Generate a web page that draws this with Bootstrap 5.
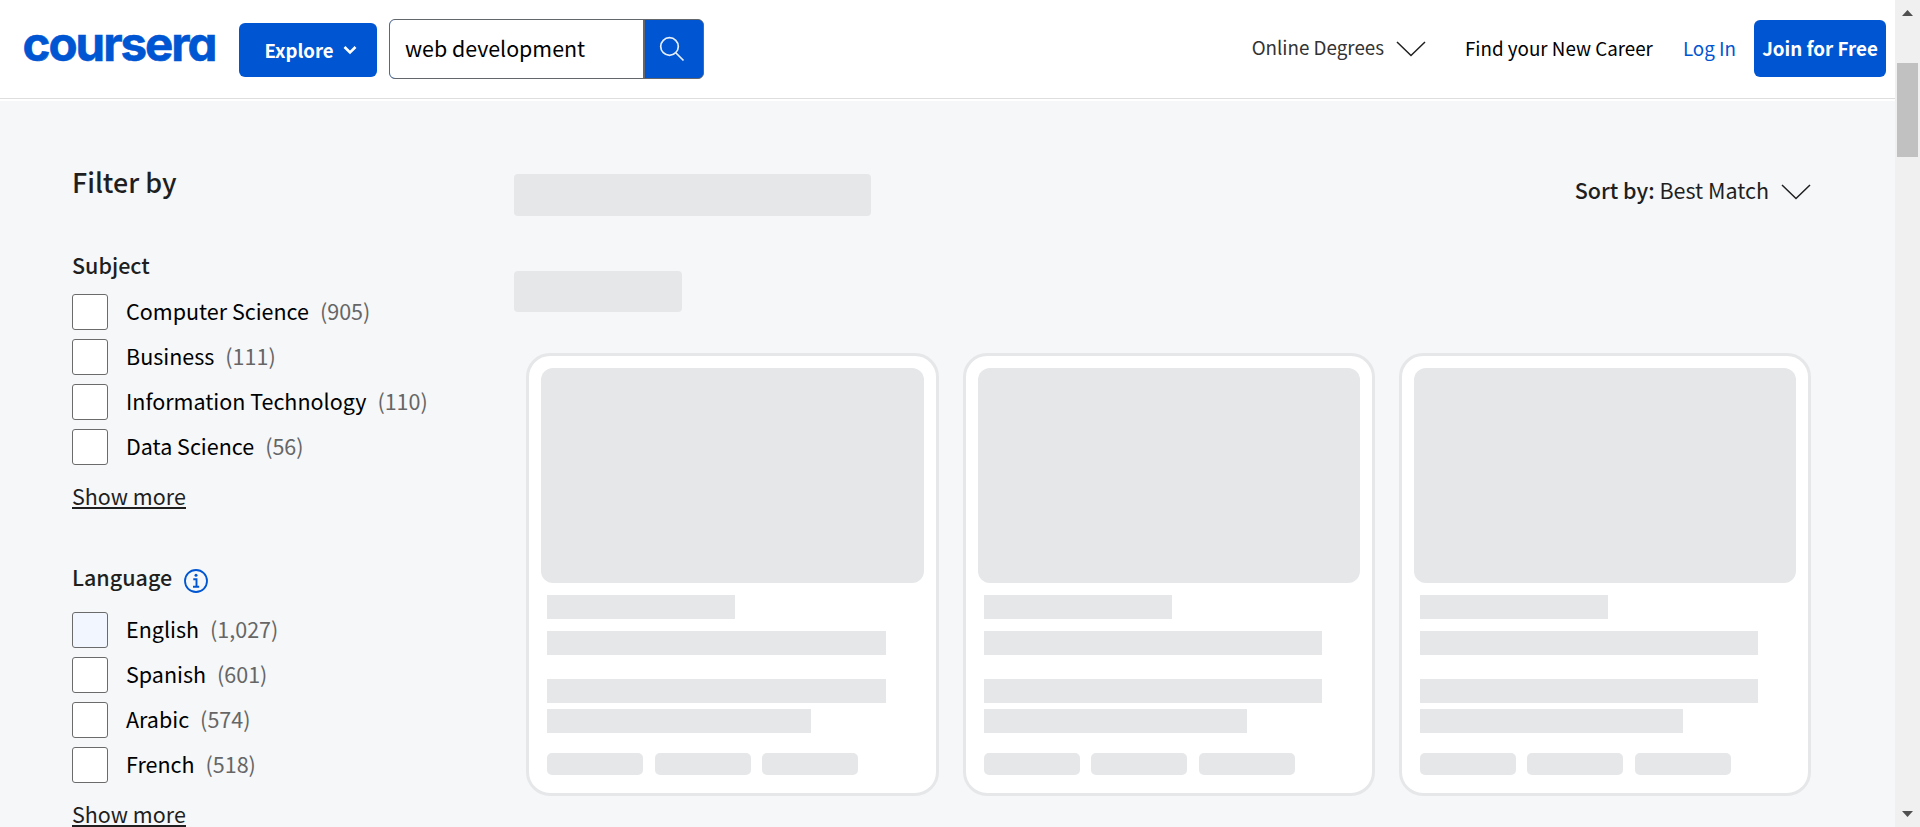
<!DOCTYPE html>
<html lang="en">
<head>
<meta charset="utf-8">
<meta name="viewport" content="width=device-width, initial-scale=1">
<title>web development | Coursera</title>
<link href="https://cdn.jsdelivr.net/npm/bootstrap@5.3.0/dist/css/bootstrap.min.css" rel="stylesheet">
<style>
:root{--blue:#0056d2;--bone:#e5e7e9;--ink:#1f1f1f}
body{font-family:"Noto Sans CJK SC",sans-serif;font-size:21.5px;line-height:30px;color:var(--ink);background:#f5f7f9}
h1,h2{font-weight:500;line-height:30px;margin:0}
h1{font-size:26.8px}
h2{font-size:21.5px}
.top-bar{height:101px;background:#fff;position:relative;padding:0 9px 0 20px}
.top-bar::after{content:"";position:absolute;left:0;right:0;bottom:2px;height:1px;background:#dedede}
.wordmark{margin-top:12px;font:700 47.5px Inter,sans-serif;font-feature-settings:"cv11"}
.btn-blue{background:var(--blue)!important;color:#fff!important;border:0;border-radius:6px;font-size:18.8px;font-weight:700;line-height:30px;padding:0;display:flex;align-items:center;justify-content:center}
.explore{width:138px;height:54px;margin:23px 0 0 19px;gap:9px;font-size:18.6px;padding:0 0 1px 5px}
.search-box{width:315px;height:60px;margin:19px 0 0 12px;border:1px solid #63666a;border-radius:6px;background:var(--blue);overflow:hidden}
.search-box .form-control{flex:0 0 253px;border:0;border-radius:0;padding:0 0 4px 15px;font-size:21.4px;line-height:30px;height:58px;color:#000;background:#fff;box-shadow:none}
.search-box button{border:0;border-left:2px solid #63666a;background:var(--blue);padding:0}
.nav-text{font-size:18.8px;line-height:30px;color:#000;text-decoration:none}
.join{width:132px;height:57px;margin:20px 0 0 18px;font-size:18.8px;padding-bottom:1px}
.layout{padding:65px 84px 0 72px}
.filters{width:442px;flex:none}
.option{height:36px;margin-bottom:9px;color:#000}
.option .form-check-input{width:36px;height:36px;margin:0 18px 0 0;float:none;border:1px solid #6b6b6b;border-radius:3px;background-color:#fff;flex:none}
.option .form-check-input.hovered{background-color:#f2f7ff}
.option label{padding-bottom:3px}
.option span{color:#666;margin-left:11px;padding-bottom:3px}
.more{display:inline-block;color:var(--ink);line-height:30px;height:28px;text-decoration:none;border-bottom:2px solid var(--ink);vertical-align:top}
.bone{background:var(--bone)}
.bone-title{height:41.4px;border-radius:4px}
.cards{padding-left:12.4px;display:grid;grid-template-columns:repeat(3,1fr);gap:24px}
.course{height:443px;border:3px solid var(--bone);border-radius:24px;background:#fff;padding:12px}
.thumb{height:215px;border-radius:12px}
.course-lines{padding:12px 0 0 6px}
.line{height:24px}
.chip{width:96px;height:21.5px;border-radius:5px}
.scroll-rail{width:25px;background:#f0f0f0;flex:none}
.thumb-bar{width:21px;height:94px;margin:47px 0 0 2px;background:#c1c1c1}
</style>
</head>
<body class="vh-100 overflow-hidden d-flex">
<div class="flex-grow-1 overflow-hidden">
  <header class="top-bar d-flex align-items-start">
    <svg class="wordmark" width="200" height="66" role="img" aria-label="coursera"><text x="2.5" y="49" textLength="195" lengthAdjust="spacing" fill="#0056d2" stroke="#0056d2" stroke-width=".6">coursera</text></svg>
    <button class="btn btn-blue explore">Explore
      <svg width="14" height="10" viewBox="0 0 14 10" fill="none" stroke="#fff" stroke-width="2.600"><path d="M1.500 2 7 7.500 12.500 2"/></svg>
    </button>
    <form class="search-box d-flex">
      <input class="form-control" value="web development" aria-label="Search">
      <button type="button" class="flex-grow-1 d-flex align-items-center justify-content-center" aria-label="Search">
        <svg width="26" height="26" viewBox="0 0 26 26" fill="none" stroke="#e6eefa" stroke-width="1.700" style="margin-right:4px"><circle cx="10.500" cy="10.500" r="8.800"/><path d="m17 17 7.500 7.500"/></svg>
      </button>
    </form>
    <nav class="ms-auto d-flex align-items-start">
      <a class="nav-text" style="margin-top:32px;color:#333" href="#">Online Degrees</a>
      <svg width="30" height="16" viewBox="0 0 30 16" fill="none" stroke="#1f1f1f" stroke-width="1.500" style="margin:41px 0 0 12px"><path d="M1 1 15 14.500 29 1"/></svg>
      <a class="nav-text" style="margin:33px 0 0 39px" href="#">Find your New Career</a>
      <a class="nav-text" style="margin:33px 0 0 30px;color:#0056d2" href="#">Log In</a>
      <button class="btn btn-blue join text-nowrap">Join for Free</button>
    </nav>
  </header>

  <main class="layout d-flex">
    <aside class="filters">
      <h1 style="height:31px;padding-top:1px">Filter by</h1>
      <h2 style="margin:53px 0 14px">Subject</h2>
      <div class="option d-flex align-items-center"><input id="s1" type="checkbox" class="form-check-input"><label for="s1">Computer Science</label><span>(905)</span></div>
      <div class="option d-flex align-items-center"><input id="s2" type="checkbox" class="form-check-input"><label for="s2">Business</label><span>(111)</span></div>
      <div class="option d-flex align-items-center"><input id="s3" type="checkbox" class="form-check-input"><label for="s3">Information Technology</label><span>(110)</span></div>
      <div class="option d-flex align-items-center"><input id="s4" type="checkbox" class="form-check-input"><label for="s4">Data Science</label><span>(56)</span></div>
      <div style="height:88px;padding-top:7px"><a class="more">Show more</a></div>
      <div class="d-flex" style="height:50px">
        <h2>Language</h2>
        <svg width="24" height="24" viewBox="0 0 24 24" fill="none" stroke="#0056d2" stroke-width="1.800" style="margin:7px 0 0 12px"><circle cx="12" cy="12" r="11"/><path d="M9.300 10.200H12.500V17.800M9 17.800H15.200" stroke-width="1.900"/><circle cx="12" cy="6.300" r="1.500" fill="#0056d2" stroke="none"/></svg>
      </div>
      <div class="option d-flex align-items-center"><input id="l1" type="checkbox" class="form-check-input hovered"><label for="l1">English</label><span>(1,027)</span></div>
      <div class="option d-flex align-items-center"><input id="l2" type="checkbox" class="form-check-input"><label for="l2">Spanish</label><span>(601)</span></div>
      <div class="option d-flex align-items-center"><input id="l3" type="checkbox" class="form-check-input"><label for="l3">Arabic</label><span>(574)</span></div>
      <div class="option d-flex align-items-center"><input id="l4" type="checkbox" class="form-check-input"><label for="l4">French</label><span>(518)</span></div>
      <div style="padding-top:7px"><a class="more">Show more</a></div>
    </aside>

    <section class="flex-grow-1">
      <div class="d-flex align-items-start" style="height:104.500px;padding-top:8.300px">
        <div class="bone bone-title" style="width:357px"></div>
        <div class="ms-auto d-flex align-items-start">
          <span style="padding-top:.8px"><span style="font-weight:500">Sort by:</span> Best Match</span>
          <svg width="30" height="16" viewBox="0 0 30 16" fill="none" stroke="#1f1f1f" stroke-width="1.500" style="margin:10px 0 0 12px"><path d="M1 1 15 14.500 29 1"/></svg>
        </div>
      </div>
      <div class="bone bone-title" style="width:168px;margin-bottom:41.100px"></div>
      <div class="cards" id="cards"></div>
    </section>
  </main>
</div>
<div class="scroll-rail d-flex flex-column">
  <svg width="11" height="6" viewBox="0 0 11 6" fill="#505050" style="margin:10px 0 0 7px"><path d="M0 6 5.500 0 11 6z"/></svg>
  <div class="thumb-bar"></div>
  <svg class="mt-auto" width="11" height="6" viewBox="0 0 11 6" fill="#505050" style="margin:0 0 10px 7px"><path d="M0 0 5.500 6 11 0z"/></svg>
</div>
<script src="https://cdn.jsdelivr.net/npm/bootstrap@5.3.0/dist/js/bootstrap.bundle.min.js"></script>
<script>
const card = `<div class="course">
  <div class="bone thumb"></div>
  <div class="course-lines">
    <div class="bone line w-50"></div>
    <div class="bone line" style="width:90%;margin-top:12px"></div>
    <div class="bone line" style="width:90%;margin-top:24px"></div>
    <div class="bone line" style="width:70%;margin-top:6px"></div>
    <div class="d-flex" style="gap:11.500px;margin-top:20.500px">
      <div class="bone chip"></div><div class="bone chip"></div><div class="bone chip"></div>
    </div>
  </div>
</div>`;
document.getElementById('cards').innerHTML = card.repeat(3);
</script>
</body>
</html>
